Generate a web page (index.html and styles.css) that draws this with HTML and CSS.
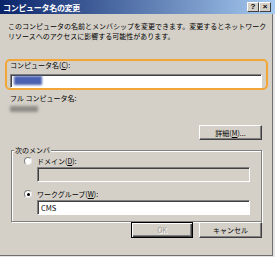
FILE: index.html
```html
<!DOCTYPE html>
<html lang="ja">
<head>
  <meta charset="UTF-8">
  <title>コンピュータ名の変更</title>
  <link rel="stylesheet" href="styles.css">
</head>
<body>
  <div class="titlebar">
    <span class="title">コンピュータ名の変更</span>
    <div class="title-buttons">
      <span class="tbtn">?</span>
      <span class="tbtn">×</span>
    </div>
  </div>
  <div class="window">
    <p class="desc">このコンピュータの名前とメンバシップを変更できます。変更するとネットワーク<br>リソースへのアクセスに影響する可能性があります。</p>

    <!-- highlighted field -->
    <div class="highlight">
      <div class="label">コンピュータ名(<u>C</u>):</div>
      <div class="field"><span class="blur-sel"></span></div>
    </div>

    <div class="label full">フル コンピュータ名:</div>
    <div class="blur-name"></div>

    <div class="btn-row more">
      <span class="btn wide">詳細(<u>M</u>)...</span>
    </div>

    <fieldset class="group">
      <legend>次のメンバ</legend>
      <div class="radio-row first">
        <span class="radio"></span>
        <span>ドメイン(<u>D</u>):</span>
      </div>
      <div class="field disabled"></div>
      <div class="radio-row second">
        <span class="radio checked"></span>
        <span>ワークグループ(<u>W</u>):</span>
      </div>
      <div class="field">CMS</div>
    </fieldset>

    <div class="btn-row bottom">
      <span class="btn default"><span class="dim">OK</span></span>
      <span class="btn wide">キャンセル</span>
    </div>
  </div>
</body>
</html>
```

FILE: styles.css
```css
body {
  margin: 0;
  width: 275px;
  height: 257px;
  background-color: #e4e4e4;
  font-family: "Noto Sans CJK JP", "Liberation Sans", sans-serif;
  font-size: 7px;
  color: #000;
  overflow: hidden;
}

.titlebar {
  height: 14px;
  background: linear-gradient(to right, #0a246a, #a6caf0);
  display: flex;
  align-items: center;
  justify-content: space-between;
}

.title {
  color: #fff;
  font-weight: bold;
  font-size: 8px;
  letter-spacing: -0.3px;
  margin-left: 3px;
}

.title-buttons {
  display: flex;
  margin-right: 4px;
}

.tbtn {
  width: 12px;
  height: 10px;
  box-sizing: border-box;
  background-color: #d4d0c8;
  border: 1px solid;
  border-color: #fff #404040 #404040 #fff;
  font-family: "Liberation Sans", sans-serif;
  font-weight: bold;
  font-size: 8px;
  line-height: 8px;
  text-align: center;
}

.window {
  background-color: #d4d0c8;
  border-right: 1px solid #707070;
  border-bottom: 1px solid #707070;
  padding: 0 0 0 5px;
  box-sizing: border-box;
  width: 273px;
  height: 242px;
  display: flex;
  flex-direction: column;
}

.desc {
  margin: 7px 0 0 3px;
  line-height: 10px;
  white-space: nowrap;
}

.highlight {
  margin-top: 18px;
  width: 263px;
  height: 31px;
  box-sizing: border-box;
  border: 2px solid #f3a535;
  border-radius: 5px;
  padding: 0 4px 0 3px;
}

.label {
  line-height: 9px;
  white-space: nowrap;
}

.field {
  height: 15px;
  box-sizing: border-box;
  background-color: #fff;
  border: 1px solid;
  border-color: #808080 #fff #fff #808080;
  box-shadow: inset 1px 1px #404040;
  padding: 1px 0 0 3px;
  line-height: 12px;
  font-size: 7.5px;
}

.highlight .field {
  margin-top: 4px;
  height: 14px;
}

.blur-sel {
  display: block;
  width: 28px;
  height: 9px;
  background-color: #4a60b0;
  filter: blur(1.2px);
}

.full {
  margin: 3px 0 0 5px;
  line-height: 10px;
}

.blur-name {
  margin: 3px 0 0 5px;
  width: 28px;
  height: 6px;
  background-color: #8e8c88;
  filter: blur(1.5px);
}

.btn-row {
  display: flex;
  justify-content: flex-end;
  gap: 6px;
  margin-right: 10px;
}

.more {
  margin-top: 13px;
}

.btn {
  width: 62px;
  height: 15px;
  box-sizing: border-box;
  border: 1px solid;
  border-color: #fff #404040 #404040 #fff;
  box-shadow: inset -1px -1px #808080;
  display: flex;
  align-items: center;
  justify-content: center;
  line-height: 10px;
}

.btn.wide {
  width: 63px;
}

.bottom .btn {
  height: 16px;
}

.btn.default {
  border: 1px solid #000;
  box-shadow: inset 1px 1px #fff, inset -1px -1px #404040, inset -2px -2px #808080;
}

.dim {
  color: #a09c94;
  text-shadow: 1px 1px #fff;
}

.group {
  margin: 5px 10px 0 6px;
  padding: 0 12px 6px 12px;
  border: 1px solid #808080;
  box-shadow: inset 1px 1px #fff, 1px 1px #fff;
  min-width: 0;
}

.group legend {
  padding: 0 1px;
  margin-left: -10px;
  line-height: 10px;
  background-color: #d4d0c8;
}

.radio-row {
  display: flex;
  align-items: center;
  gap: 5px;
  line-height: 10px;
  height: 10px;
}

.radio-row.first {
  margin-top: 1px;
}

.radio-row.second {
  margin-top: 7px;
}

.radio {
  width: 8px;
  height: 8px;
  box-sizing: border-box;
  border-radius: 50%;
  background-color: #fff;
  border: 1px solid;
  border-color: #808080 #e8e8e8 #e8e8e8 #808080;
  display: flex;
  align-items: center;
  justify-content: center;
}

.radio.checked::after {
  content: "";
  width: 3px;
  height: 3px;
  border-radius: 50%;
  background-color: #000;
}

.group .field {
  margin-left: 13px;
  width: 213px;
  margin-top: 1px;
}

.field.disabled {
  background-color: #d4d0c8;
}
```
